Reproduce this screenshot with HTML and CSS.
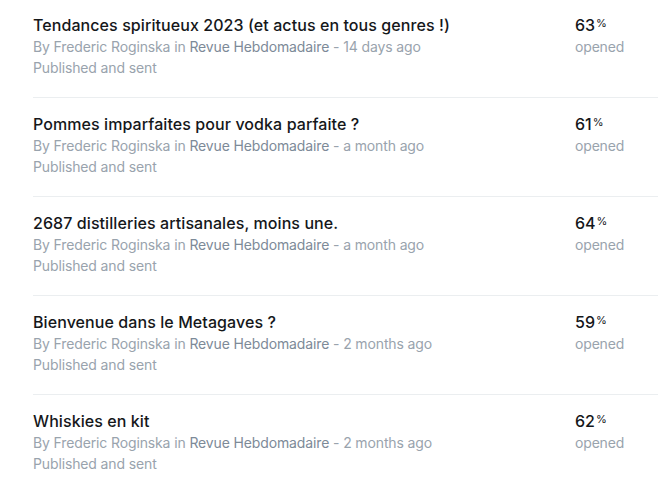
FILE: index.html
```html
<!DOCTYPE html>
<html lang="en">
<head>
    <meta charset="UTF-8">
    <meta name="viewport" content="width=device-width, initial-scale=1.0">
    <title>Posts</title>
    <link rel="stylesheet" href="styles.css">
</head>
<body>
    <ol class="post-list">
        <li class="post-row">
            <div class="post-main">
                <h3 class="post-title">Tendances spiritueux 2023 (et actus en tous genres !)</h3>
                <p class="post-meta">By Frederic Roginska in <span class="post-tag">Revue Hebdomadaire</span> - 14 days ago</p>
                <p class="post-status">Published and sent</p>
            </div>
            <div class="post-stat">
                <div class="stat-value">63<sup>%</sup></div>
                <div class="stat-label">opened</div>
            </div>
        </li>
        <li class="post-row">
            <div class="post-main">
                <h3 class="post-title">Pommes imparfaites pour vodka parfaite ?</h3>
                <p class="post-meta">By Frederic Roginska in <span class="post-tag">Revue Hebdomadaire</span> - a month ago</p>
                <p class="post-status">Published and sent</p>
            </div>
            <div class="post-stat">
                <div class="stat-value">61<sup>%</sup></div>
                <div class="stat-label">opened</div>
            </div>
        </li>
        <li class="post-row">
            <div class="post-main">
                <h3 class="post-title">2687 distilleries artisanales, moins une.</h3>
                <p class="post-meta">By Frederic Roginska in <span class="post-tag">Revue Hebdomadaire</span> - a month ago</p>
                <p class="post-status">Published and sent</p>
            </div>
            <div class="post-stat">
                <div class="stat-value">64<sup>%</sup></div>
                <div class="stat-label">opened</div>
            </div>
        </li>
        <li class="post-row">
            <div class="post-main">
                <h3 class="post-title">Bienvenue dans le Metagaves ?</h3>
                <p class="post-meta">By Frederic Roginska in <span class="post-tag">Revue Hebdomadaire</span> - 2 months ago</p>
                <p class="post-status">Published and sent</p>
            </div>
            <div class="post-stat">
                <div class="stat-value">59<sup>%</sup></div>
                <div class="stat-label">opened</div>
            </div>
        </li>
        <li class="post-row">
            <div class="post-main">
                <h3 class="post-title">Whiskies en kit</h3>
                <p class="post-meta">By Frederic Roginska in <span class="post-tag">Revue Hebdomadaire</span> - 2 months ago</p>
                <p class="post-status">Published and sent</p>
            </div>
            <div class="post-stat">
                <div class="stat-value">62<sup>%</sup></div>
                <div class="stat-label">opened</div>
            </div>
        </li>
    </ol>
</body>
</html>
```

FILE: styles.css
```css
body {
    margin: 0;
    background-color: #fff;
    font-family: Inter, "Noto Sans", sans-serif;
    color: #15171a;
}
.post-list {
    list-style: none;
    margin: 0;
    padding: 0 0 0 33px;
}
.post-row {
    display: flex;
    padding: 15px 0 19px;
    border-bottom: 1px solid #ebeef0;
}
.post-row:first-child {
    padding-top: 14px;
}
.post-main {
    flex: 1;
}
.post-title {
    margin: 0;
    font-size: 16px;
    font-weight: 500;
    line-height: 22px;
    letter-spacing: 0.08px;
}
.post-meta,
.post-status {
    margin: 0;
    font-size: 14px;
    line-height: 21px;
    letter-spacing: -0.13px;
    color: #99a3ad;
}
.post-tag {
    color: #7d8a98;
}
.post-stat {
    width: 83px;
}
.stat-value {
    font-size: 16px;
    font-weight: 500;
    line-height: 22px;
}
.stat-value sup {
    font-size: 11px;
    font-weight: 400;
    margin-left: 1px;
    vertical-align: 4px;
    line-height: 0;
}
.stat-label {
    font-size: 14px;
    line-height: 21px;
    letter-spacing: -0.17px;
    color: #99a3ad;
}
```
